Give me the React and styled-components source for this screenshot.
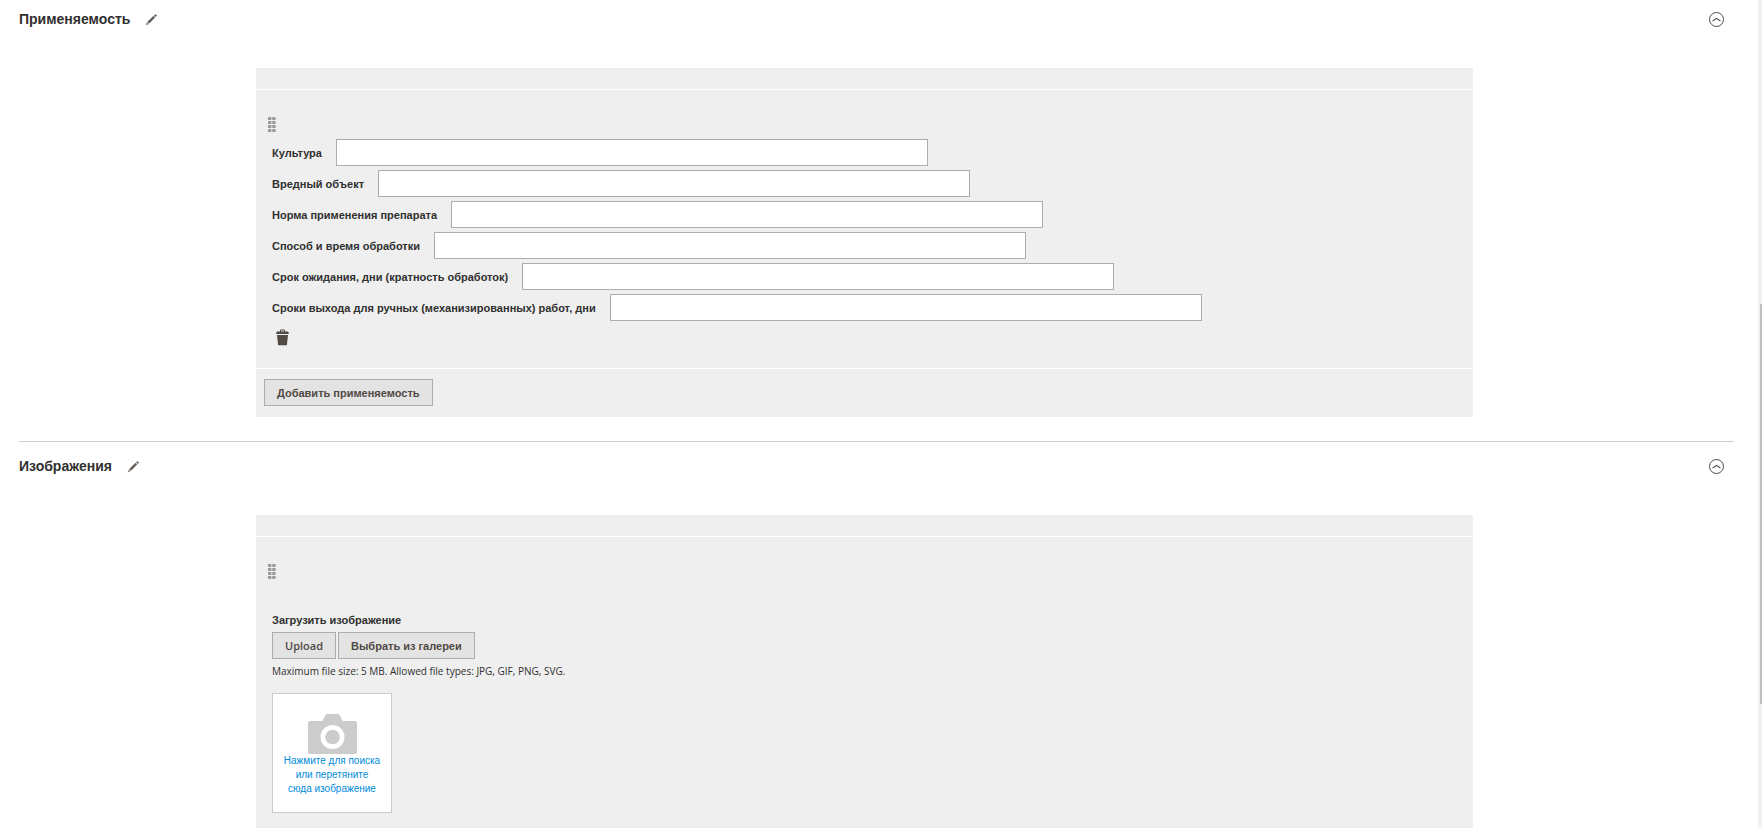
import React from 'react';
import styled, { createGlobalStyle } from 'styled-components';

const GlobalStyle = createGlobalStyle`
  *, *::before, *::after {
    box-sizing: border-box;
  }

  body {
    margin: 0;
    background: #fff;
    color: #303030;
    font-family: 'Liberation Sans', Arial, sans-serif;
    font-size: 11px;
  }
`;

const Page = styled.div`
  display: flex;
  height: 100vh;
  overflow: hidden;
`;

const Main = styled.main`
  flex: 1;
  min-width: 0;
  padding: 0 24px 0 19px;
`;

const ScrollTrack = styled.div`
  display: grid;
  flex: 0 0 4px;
  grid-template-rows: 304fr 400fr 124fr;
  padding-left: 2px;
  background: #f1f1f1;
`;

const ScrollThumb = styled.div`
  grid-row: 2;
  background: #c1c1c1;
`;

const StyledSection = styled.section`
  padding-bottom: 24px;

  & + & {
    padding-top: 5px;
    border-top: 1px solid #ccc;
  }
`;

const SectionHeader = styled.header`
  display: flex;
  align-items: center;
  height: 39px;
  margin-bottom: 29px;
  padding-right: 10px;
`;

const Title = styled.h2`
  margin: 0;
  font-size: 14px;
  font-weight: 700;
  line-height: 17px;
`;

const IconButton = styled.button`
  display: inline-flex;
  padding: 0;
  border: 0;
  background: none;
  color: #514943;
  cursor: pointer;
`;

const EditButton = styled(IconButton)`
  margin-left: 16px;
`;

const CollapseButton = styled(IconButton)`
  margin-left: auto;
`;

const DeleteButton = styled(IconButton)`
  margin: 8px 0 0 4px;
`;

const Columns = styled.div`
  display: grid;
  grid-template-columns: 237fr 1217fr 261fr;
`;

const Panel = styled.div`
  grid-column: 2;
  background: #efefef;
`;

const PanelHead = styled.div`
  height: 22px;
  border-bottom: 1px solid #fff;
`;

const PanelBody = styled.div`
  padding: 27px 16px 20px;
`;

const PanelFooter = styled.div`
  padding: 10px 8px 11px;
  border-top: 1px solid #fff;
`;

const DragHandle = styled.div`
  display: flex;
  margin: 0 0 7px -4px;
`;

const FieldList = styled.div`
  display: flex;
  flex-direction: column;
  gap: 4px;
`;

const FieldRow = styled.div`
  display: flex;
  align-items: center;
  gap: 14px;
`;

const Label = styled.label`
  font-weight: 700;
  line-height: 16px;
`;

const TextInput = styled.input`
  flex: 0 1 592px;
  min-width: 0;
  height: 27px;
  padding: 0 8px;
  border: 1px solid #adadad;
  border-radius: 0;
  background: #fff;
  color: inherit;
  font: inherit;
`;

const Button = styled.button`
  height: 27px;
  padding: 0 12px;
  border: 1px solid #adadad;
  background: #e3e3e3;
  color: #514943;
  font-family: ${({ $latin }) => ($latin ? "'Open Sans', sans-serif" : 'inherit')};
  font-size: 11px;
  font-weight: ${({ $latin }) => ($latin ? 600 : 700)};
  cursor: pointer;
`;

const Uploader = styled.div`
  padding-top: 26px;
`;

const ButtonRow = styled.div`
  display: flex;
  gap: 2px;
  margin-top: 4px;
`;

const Note = styled.p`
  margin: 4px 0 14px;
  font-family: 'Open Sans', sans-serif;
  font-size: 10px;
  line-height: 16px;
`;

const DropZone = styled.button`
  display: flex;
  flex-direction: column;
  align-items: center;
  width: 120px;
  height: 120px;
  padding: 20px 10px 0;
  border: 1px solid #ccc;
  background: #fff;
  color: #008bdb;
  font-family: inherit;
  font-size: 10px;
  line-height: 14px;
  text-align: center;
  cursor: pointer;
`;

const fields = [
  { id: 'culture', label: 'Культура' },
  { id: 'pest', label: 'Вредный объект' },
  { id: 'rate', label: 'Норма применения препарата' },
  { id: 'method', label: 'Способ и время обработки' },
  { id: 'waiting', label: 'Срок ожидания, дни (кратность обработок)' },
  { id: 'exit', label: 'Сроки выхода для ручных (механизированных) работ, дни' },
];

function PencilIcon() {
  return (
    <svg width="11" height="11" viewBox="0 0 11 11" fill="#665f5a" aria-hidden="true">
      <path d="M0 11 L0.8 8.4 L2.6 10.2 Z" />
      <path d="M1.2 8 L7.5 1.8 L9.2 3.5 L3 9.7 Z" />
      <path d="M8.1 1.3 L9 0.4 Q9.5 0 10 0.4 L10.6 1 Q11 1.5 10.6 2 L9.7 2.9 Z" />
    </svg>
  );
}

function CollapseIcon() {
  return (
    <svg width="15" height="15" viewBox="0 0 15 15" fill="none" stroke="currentColor" aria-hidden="true">
      <circle cx="7.5" cy="7.5" r="7" />
      <path d="M3.6 9 L7.5 6.3 L11.4 9" strokeWidth="1.1" />
    </svg>
  );
}

function DragIcon() {
  return (
    <svg width="8" height="15" viewBox="0 0 8 15" fill="#9e9a98" aria-hidden="true">
      {[0, 4, 8, 12].map((y) => (
        <React.Fragment key={y}>
          <rect x="0" y={y} width="3.4" height="3" />
          <rect x="4.2" y={y} width="3.4" height="3" />
        </React.Fragment>
      ))}
    </svg>
  );
}

function TrashIcon() {
  return (
    <svg width="13" height="17" viewBox="0 0 13 17" fill="currentColor" aria-hidden="true">
      <path d="M4 2.6 V1.4 Q4 0.4 5 0.4 H8 Q9 0.4 9 1.4 V2.6 H12 Q12.8 2.8 12.8 5 H0.2 Q0.2 2.8 1 2.6 Z M5.1 2.6 H7.9 V1.6 H5.1 Z" fillRule="evenodd" />
      <path d="M1 6 H12 L10.9 16.2 H2.1 Z" />
    </svg>
  );
}

function CameraIcon() {
  return (
    <svg width="49" height="40" viewBox="0 0 49 40" fill="#ccc" aria-hidden="true">
      <path
        fillRule="evenodd"
        d="M2 7 H14.5 L17.2 1.2 Q17.8 0 19 0 H30 Q31.2 0 31.8 1.2 L34.5 7 H47 Q49 7 49 9 V38 Q49 40 47 40 H2 Q0 40 0 38 V9 Q0 7 2 7 Z M24.5 11 A12 12 0 1 0 24.5 35 A12 12 0 1 0 24.5 11 Z"
      />
      <circle cx="24.5" cy="23" r="7.3" />
    </svg>
  );
}

function Section({ title, children }) {
  return (
    <StyledSection>
      <SectionHeader>
        <Title>{title}</Title>
        <EditButton type="button" aria-label="Изменить">
          <PencilIcon />
        </EditButton>
        <CollapseButton type="button" aria-label="Свернуть">
          <CollapseIcon />
        </CollapseButton>
      </SectionHeader>
      <Columns>
        <Panel>
          <PanelHead />
          {children}
        </Panel>
      </Columns>
    </StyledSection>
  );
}

function App() {
  return (
    <>
      <GlobalStyle />
      <Page>
        <Main>
          <Section title="Применяемость">
            <PanelBody>
              <DragHandle>
                <DragIcon />
              </DragHandle>
              <FieldList>
                {fields.map(({ id, label }) => (
                  <FieldRow key={id}>
                    <Label htmlFor={id}>{label}</Label>
                    <TextInput id={id} type="text" />
                  </FieldRow>
                ))}
              </FieldList>
              <DeleteButton type="button" aria-label="Удалить">
                <TrashIcon />
              </DeleteButton>
            </PanelBody>
            <PanelFooter>
              <Button type="button">Добавить применяемость</Button>
            </PanelFooter>
          </Section>
          <Section title="Изображения">
            <PanelBody>
              <DragHandle>
                <DragIcon />
              </DragHandle>
              <Uploader>
                <Label as="div">Загрузить изображение</Label>
                <ButtonRow>
                  <Button type="button" $latin>
                    Upload
                  </Button>
                  <Button type="button">Выбрать из галереи</Button>
                </ButtonRow>
                <Note>Maximum file size: 5 MB. Allowed file types: JPG, GIF, PNG, SVG.</Note>
                <DropZone type="button">
                  <CameraIcon />
                  <span>Нажмите для поиска или перетяните сюда изображение</span>
                </DropZone>
              </Uploader>
            </PanelBody>
          </Section>
        </Main>
        <ScrollTrack>
          <ScrollThumb />
        </ScrollTrack>
      </Page>
    </>
  );
}

export default App;
